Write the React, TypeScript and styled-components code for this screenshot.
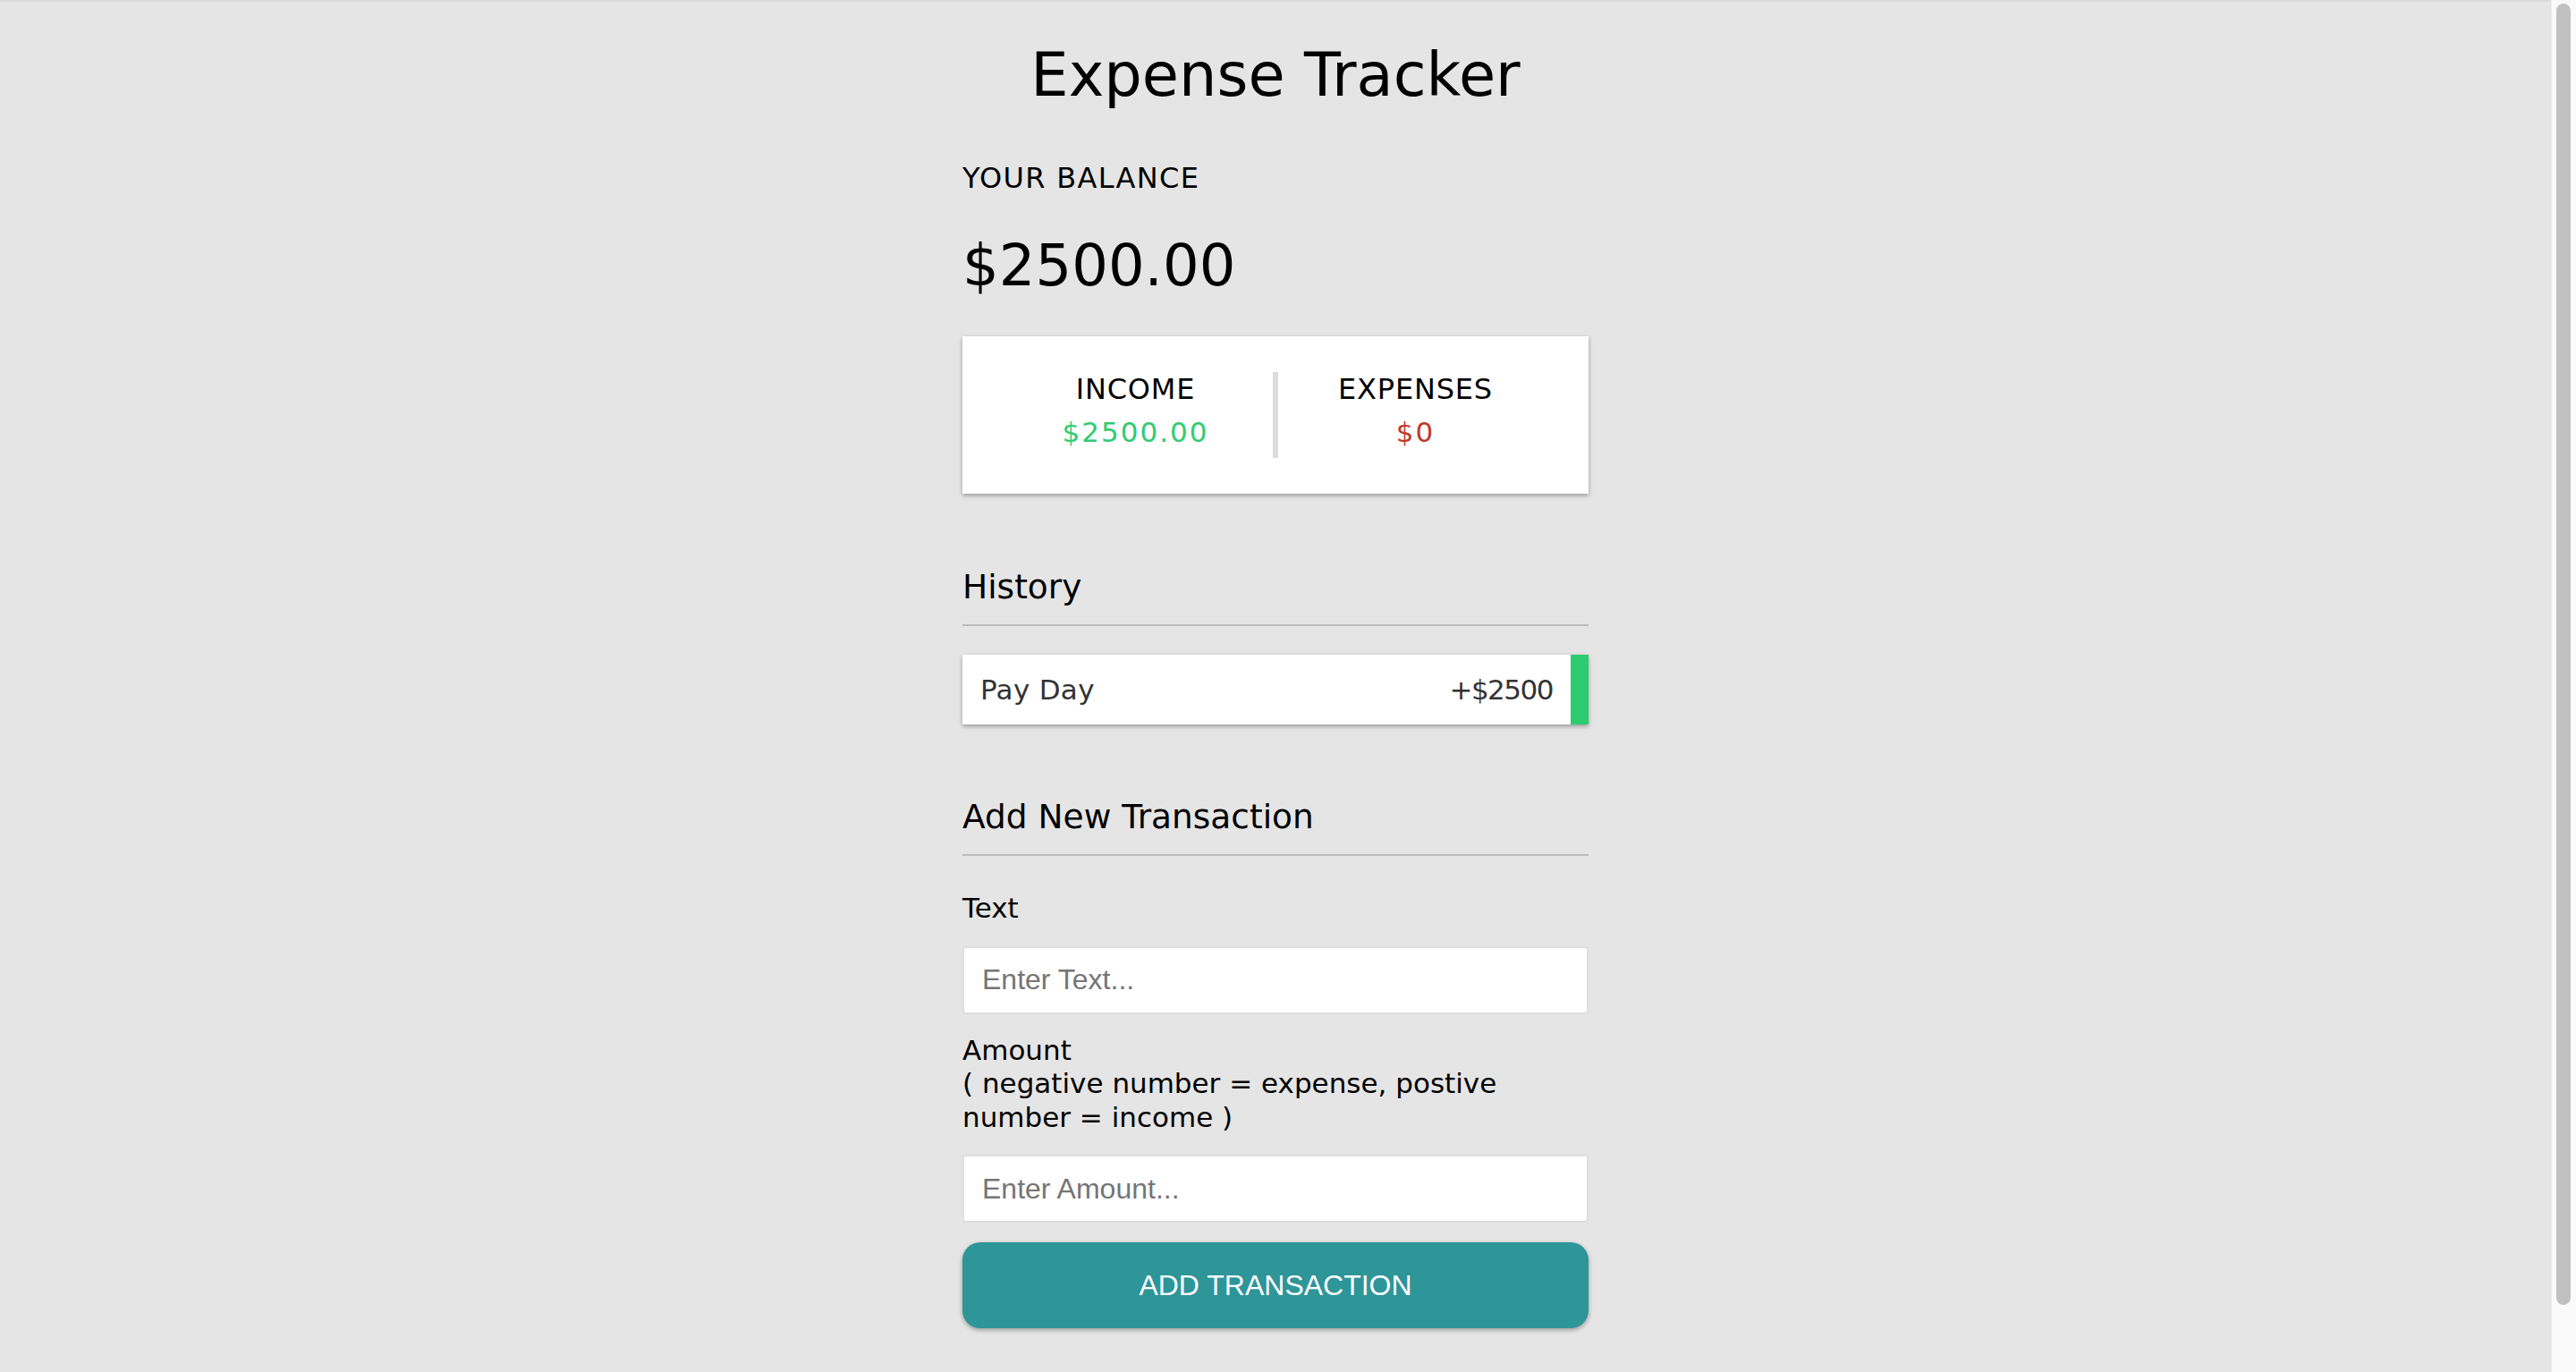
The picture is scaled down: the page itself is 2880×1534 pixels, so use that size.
import React from "react";
import styled, { createGlobalStyle } from "styled-components";

const GlobalStyle = createGlobalStyle`
  * { box-sizing: border-box; }
  html {
    background: #e5e5e5;
    border-top: 2px solid #dad9de;
  }
  body {
    margin: 0;
    background: #e5e5e5;
    font-family: "DejaVu Sans", "Open Sans", sans-serif;
    color: #000;
  }
`;

const Page = styled.div`
  min-height: 100vh;
  margin-right: 28px;
  padding: 43.5px 0 132px;
`;

const ScrollTrack = styled.div`
  position: fixed;
  top: 0;
  right: 0;
  bottom: 0;
  width: 28px;
  background: #fafafa;
  border-left: 1px solid #ececec;
`;

const ScrollThumb = styled.div`
  position: absolute;
  top: 4px;
  left: 5px;
  width: 16px;
  height: 1455px;
  border-radius: 8px;
  background: #c1c1c1;
`;

const Container = styled.div`
  width: 700px;
  margin: 0 auto;
`;

const Title = styled.h1`
  margin: 0;
  font-size: 67px;
  line-height: 76px;
  font-weight: 400;
  text-align: center;
`;

const BalanceLabel = styled.h4`
  margin: 59.5px 0 0;
  font-size: 32px;
  line-height: 37px;
  font-weight: 400;
  letter-spacing: 1.3px;
  text-transform: uppercase;
`;

const Balance = styled.h1`
  margin: 42px 0 0;
  font-size: 64px;
  line-height: 75px;
  font-weight: 400;
`;

const Card = styled.div`
  margin-top: 41px;
  background: #fff;
  padding: 40px;
  display: flex;
  box-shadow: 0 2px 6px rgba(0, 0, 0, 0.12), 0 2px 4px rgba(0, 0, 0, 0.24);
`;

const StatCol = styled.div`
  flex: 1 1 0;
  text-align: center;
  &:first-of-type {
    border-right: 6px solid #dcdcdc;
  }
`;

const StatTitle = styled.h4`
  margin: 0;
  font-size: 32px;
  line-height: 38px;
  font-weight: 400;
  letter-spacing: 0.8px;
  text-transform: uppercase;
`;

const Money = styled.p<{ $color: string }>`
  margin: 11px 0;
  font-size: 31px;
  line-height: 36px;
  letter-spacing: 2px;
  color: ${(p) => p.$color};
`;

const SectionTitle = styled.h3<{ $top: number }>`
  margin: ${(p) => p.$top}px 0 0;
  font-size: 37.5px;
  line-height: 44px;
  font-weight: 400;
  padding-bottom: 20px;
  border-bottom: 2px solid #bbb;
`;

const List = styled.ul`
  list-style: none;
  margin: 32px 0 0;
  padding: 0;
`;

const Item = styled.li<{ $color: string }>`
  display: flex;
  justify-content: space-between;
  background: #fff;
  color: #333;
  padding: 20px;
  font-size: 31px;
  line-height: 38px;
  border-right: 20px solid ${(p) => p.$color};
  box-shadow: 0 2px 6px rgba(0, 0, 0, 0.12), 0 2px 4px rgba(0, 0, 0, 0.24);
`;

const ItemName = styled.span`
  letter-spacing: 0.3px;
`;

const ItemAmount = styled.span`
  letter-spacing: -1.5px;
`;

const Form = styled.form`
  display: flex;
  flex-direction: column;
  padding-top: 18px;
`;

const Label = styled.label`
  display: block;
  margin: 22px 0 23px;
  font-size: 31px;
  line-height: 37.5px;
`;

const Input = styled.input`
  display: block;
  width: 100%;
  height: 76px;
  border: 2px solid #dedede;
  border-radius: 4px;
  background: #fff;
  padding: 0 20px;
  font-family: "Liberation Sans", Arial, sans-serif;
  font-size: 32px;
  color: #000;
  outline: none;
  &::placeholder {
    color: #757575;
  }
`;

const Button = styled.button`
  display: block;
  width: 100%;
  height: 96px;
  margin-top: 22px;
  border: 0;
  border-radius: 20px;
  background: #2e9599;
  color: #fff;
  font-family: "Liberation Sans", Arial, sans-serif;
  font-size: 32px;
  text-transform: uppercase;
  cursor: pointer;
  box-shadow: 0 2px 6px rgba(0, 0, 0, 0.12), 0 2px 4px rgba(0, 0, 0, 0.24);
`;

export default function App() {
  return (
    <>
      <GlobalStyle />
      <Page>
        <Container>
          <Title>Expense Tracker</Title>
          <BalanceLabel>Your Balance</BalanceLabel>
          <Balance>$2500.00</Balance>
          <Card>
            <StatCol>
              <StatTitle>Income</StatTitle>
              <Money $color="#2ecc71">$2500.00</Money>
            </StatCol>
            <StatCol>
              <StatTitle>Expenses</StatTitle>
              <Money $color="#c0392b">$0</Money>
            </StatCol>
          </Card>
          <SectionTitle $top={82}>History</SectionTitle>
          <List>
            <Item $color="#2ecc71">
              <ItemName>Pay Day</ItemName>
              <ItemAmount>+$2500</ItemAmount>
            </Item>
          </List>
          <SectionTitle $top={81}>Add New Transaction</SectionTitle>
          <Form onSubmit={(e) => e.preventDefault()}>
            <Label htmlFor="text">Text</Label>
            <Input id="text" type="text" placeholder="Enter Text..." />
            <Label htmlFor="amount">
              Amount
              <br />( negative number = expense, postive number = income )
            </Label>
            <Input id="amount" type="number" placeholder="Enter Amount..." />
            <Button type="submit">Add Transaction</Button>
          </Form>
        </Container>
      </Page>
      <ScrollTrack>
        <ScrollThumb />
      </ScrollTrack>
    </>
  );
}
